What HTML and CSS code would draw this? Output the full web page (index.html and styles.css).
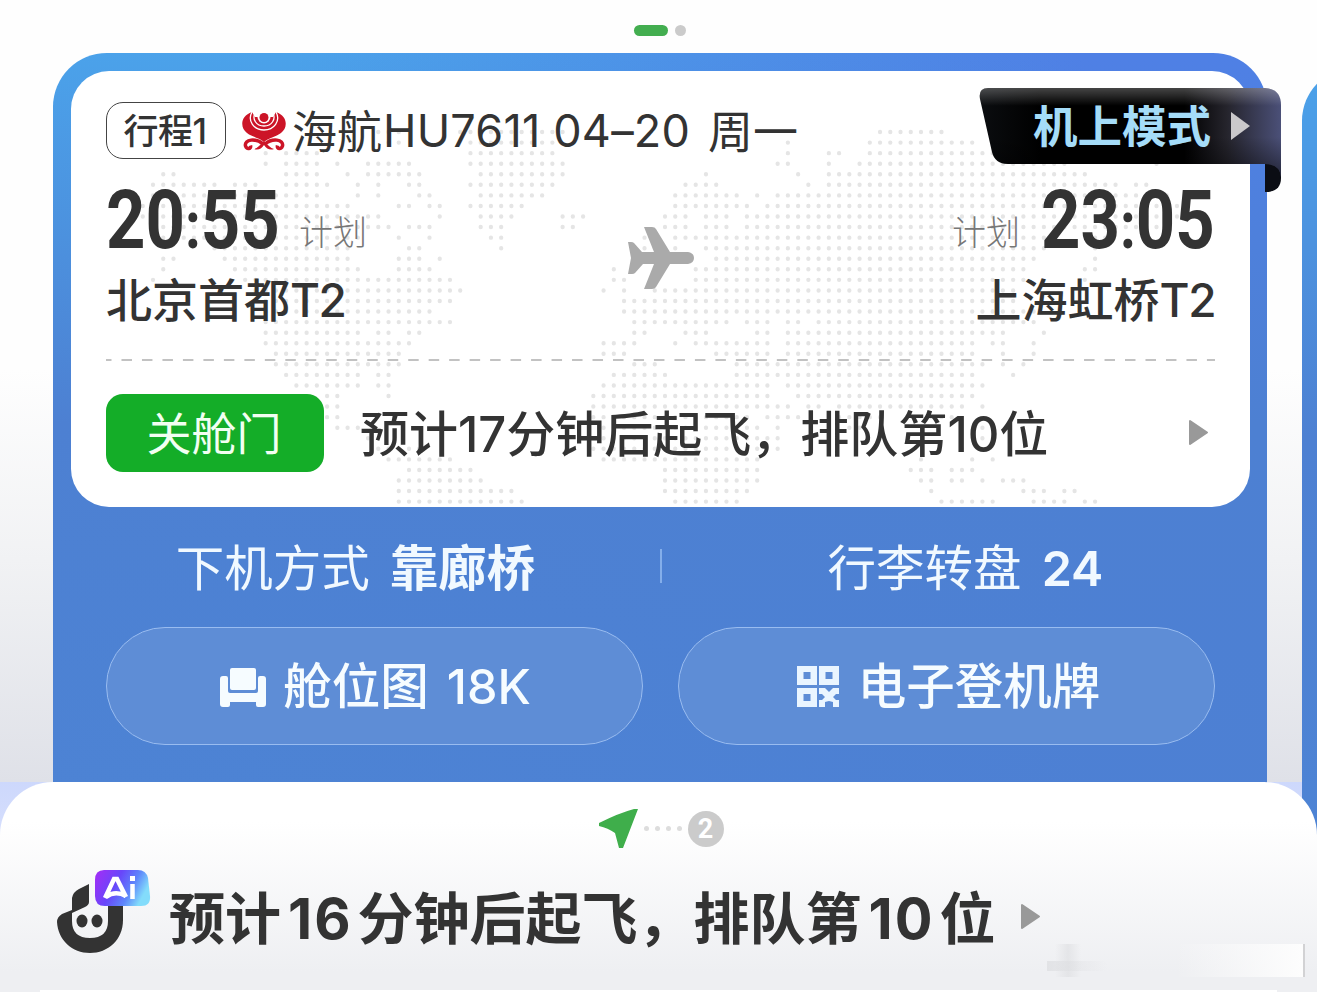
FILE: index.html
```html
<!DOCTYPE html>
<html lang="zh-CN">
<head>
  <meta charset="UTF-8" />
  <meta name="viewport" content="width=device-width, initial-scale=1.0"/>
  <title>航班行程</title>
  <link rel="stylesheet" href="styles.css">
</head>
<body>
  <div class="page">
    <div class="pager">
      <span class="pager-on"></span>
      <span class="pager-off"></span>
    </div>

    <div class="carousel">
      <div class="trip">
        <div class="card">
          <!-- dotted world map, one subpath per run of dots -->
          <svg class="map" viewBox="-9.01 -5.78 115.14 41.29" preserveAspectRatio="none">
            <path d="M21 0h2.1M29 0h10.1M70 0h6.1M22 1h1.1M30 1h8.1M61 1h.1M69 1h10.1M10 2h.1M12 2h3.1M30 2h8.1M61 2h.1M65 2h1.1M69 2h12.1M10 3h.1M12 3h3.1M17 3h.1M20 3h4.1M30 3h9.1M60 3h1.1M65 3h.1M68 3h20.1M97 3h.1M0 4h1.1M12 4h3.1M18 4h.1M20 4h5.1M31 4h8.1M53 4h.1M62 4h.1M65 4h25.1"/>
            <path d="M-1 5h6.1M7 5h2.1M12 5h4.1M19 5h.1M21 5h.1M24 5h1.1M30 5h8.1M51 5h3.1M63 5h.1M65 5h28.1M95 5h1.1M-1 6h16.1M19 6h.1M21 6h.1M25 6h1.1M31 6h6.1M50 6h6.1M58 6h.1M60 6h38.1M-2 7h20.1M23 7h1.1M26 7h1.1M30 7h5.1M50 7h7.1M59 7h41.1M-2 8h23.1M27 8h.1M31 8h3.1M39 8h2.1M49 8h2.1M53 8h2.1M57 8h42.1M0 9h22.1M24 9h2.1M31 9h2.1M39 9h1.1M49 9h2.1M53 9h2.1M57 9h40.1"/>
            <path d="M0 10h19.1M23 10h.1M26 10h.1M32 10h1.1M47 10h1.1M50 10h1.1M52 10h34.1M91 10h1.1M5 11h13.1M24 11h1.1M33 11h.1M47 11h3.1M53 11h33.1M91 11h.1M0 12h1.1M6 12h12.1M23 12h2.1M27 12h.1M47 12h3.1M54 12h31.1M91 12h.1M0 13h.1M7 13h12.1M23 13h3.1M44 13h.1M52 13h32.1M90 13h1.1M-1 14h.1M8 14h20.1M44 14h1.1M52 14h32.1M90 14h.1M9 15h20.1M43 15h.1M45 15h.1M48 15h35.1M10 16h18.1M45 16h38.1M10 17h16.1M45 17h40.1"/>
            <path d="M10 18h18.1M46 18h9.1M57 18h2.1M61 18h1.1M64 18h21.1M10 19h9.1M21 19h1.1M24 19h1.1M46 19h1.1M51 19h2.1M58 19h1.1M61 19h21.1M86 19h.1M10 20h14.1M43 20h3.1M50 20h.1M52 20h7.1M61 20h18.1M81 20h1.1M85 20h.1M11 21h12.1M43 21h2.1M54 21h5.1M61 21h18.1M82 21h.1M85 21h.1M11 22h12.1M46 22h2.1M56 22h24.1M82 22h.1M84 22h.1M12 23h7.1M21 23h1.1M44 23h5.1M56 23h23.1M83 23h.1M13 24h6.1M21 24h1.1M43 24h16.1M61 24h19.1"/>
            <path d="M16 25h1.1M22 25h.1M42 25h14.1M57 25h2.1M62 25h17.1M16 26h1.1M42 26h14.1M57 26h4.1M63 26h1.1M66 26h12.1M80 26h.1M16 27h1.1M42 27h15.1M59 27h3.1M66 27h4.1M75 27h2.1M17 28h2.1M43 28h15.1M60 28h.1M67 28h1.1M80 28h.1M20 29h.1M43 29h17.1M80 29h.1M21 30h4.1M42 30h16.1M60 30h.1M78 30h.1M22 31h6.1M43 31h15.1M74 31h.1M79 31h.1M81 31h.1M24 32h6.1M49 32h9.1M73 32h2.1M77 32h2.1M23 33h8.1M49 33h6.1M56 33h2.1M74 33h1.1M77 33h1.1M80 33h.1M82 33h2.1M23 34h11.1M49 34h8.1M75 34h.1M84 34h2.1M88 34h1.1M23 35h12.1M50 35h6.1M76 35h5.1M85 35h3.1M90 35h1.1"/>
          </svg>

          <div class="flight">
            <span class="leg">行程1</span>
            <svg class="airline" viewBox="0 0 44 40">
              <path d="M10 1C-2 5-2 17 5 22c5 4 13 5 17 9 4-4 12-5 17-9 7-5 7-17-5-21l-3 5H13z"/>
              <path class="gap" d="M13 2c-3 6 1 13 9 13s12-7 9-13M10 1c-5 9 2 18 12 18S39 10 34 1"/>
              <circle class="halo" cx="22" cy="6" r="6.500"/>
              <circle cx="22" cy="6.500" r="4.500"/>
              <path class="curl" d="M21 33C14 27 2 28 3.500 35c1.500 4 6 3 5-.5M23 33c7-6 19-5 17.500 2-1.500 4-6 3-5-.5"/>
              <path d="M22 30l5 5q3 3 5 3-6 2-10-4-4 6-10 4 2 0 5-3z"/>
            </svg>
            <span class="flight-cn">海航</span>
            <span class="flight-no">HU7611 04–20</span>
            <span class="flight-cn weekday">周一</span>
          </div>

          <div class="times">
            <div class="time-group">
              <span class="time"><b>20<i>:</i>55</b></span>
              <span class="plan">计划</span>
            </div>
            <svg class="plane" viewBox="0 0 66 62">
              <path d="M16 0h8q3 0 4 2l14 23h18q6 1 6 6t-6 6H42L28 60q-1 2-4 2h-8l10-25H15L7 46q-1 1-3 1H0l3-16L0 15h3q2 0 3 1l8 9h12z"/>
            </svg>
            <div class="time-group">
              <span class="plan">计划</span>
              <span class="time"><b>23<i>:</i>05</b></span>
            </div>
          </div>

          <div class="airports">
            <span>北京首都<i>T2</i></span>
            <span>上海虹桥<i>T2</i></span>
          </div>

          <svg class="divider" viewBox="0 0 1109 2">
            <path d="M0 1H1109"/>
          </svg>

          <div class="status">
            <span class="gate">关舱门</span>
            <span class="status-text">预计<i>17</i>分钟后起飞，排队第<i>10</i>位</span>
            <svg class="arrow" viewBox="0 0 21 27"><path d="M2 2v23l17-11.500z"/></svg>
          </div>
        </div>

        <div class="arrival">
          <div class="arrival-item">下机方式<b>靠廊桥</b></div>
          <span class="bar"></span>
          <div class="arrival-item">行李转盘<b class="num">24</b></div>
        </div>

        <div class="actions">
          <div class="action">
            <svg class="seat" viewBox="0 0 46 40">
              <rect x="10" y="1" width="26" height="22" rx="2"/>
              <path d="M3 9h3q2 0 2 2v13q0 2 2 2h26q2 0 2-2V11q0-2 2-2h3q3 0 3 3v25q0 3-3 3h-5q-2 0-2-2v-3H10v3q0 2-2 2H3q-3 0-3-3V12q0-3 3-3z"/>
            </svg>
            <span>舱位图</span><span class="seat-no">18K</span>
          </div>
          <div class="action">
            <svg class="qr" viewBox="0 0 42 41">
              <path fill-rule="evenodd" d="M0 0h20v19H0zM6.500 6v7h7V6zM22 0h20v19H22zM28.500 6v7h7V6zM0 22h20v19H0zM6.500 28v7h7v-7z"/>
              <path d="M22 22h6l4 4 4-4h6v6h-3l-3 3 3 3h3v7h-6v-5l-4-1-4 1v5h-6v-7h3l3-3-3-3h-3z"/>
            </svg>
            <span>电子登机牌</span>
          </div>
        </div>

        <div class="ribbon">
          <svg class="ribbon-bg" viewBox="0 0 302 104">
            <defs>
              <linearGradient id="rb" x1="0" x2="1" y1="0" y2="0">
                <stop offset="0" stop-color="#0b0d10"/>
                <stop offset=".2" stop-color="#000"/>
                <stop offset=".68" stop-color="#000"/>
                <stop offset=".82" stop-color="#25242c"/>
                <stop offset="1" stop-color="#4b5078"/>
              </linearGradient>
              <linearGradient id="rs" x1="0" x2="0" y1="0" y2="1">
                <stop offset="0" stop-color="#fff" stop-opacity=".27"/>
                <stop offset=".2" stop-color="#fff" stop-opacity="0"/>
                <stop offset=".55" stop-color="#000" stop-opacity="0"/>
                <stop offset="1" stop-color="#000" stop-opacity=".5"/>
              </linearGradient>
            </defs>
            <path fill="#0b0d14" d="M286 74h16v16q0 14-16 14z"/>
            <path fill="url(#rb)" d="M9 0h277q16 1 16 17v72q-1-13-16-13H29q-13 0-16-12L1 11Q-1 0 9 0z"/>
            <path fill="url(#rs)" d="M9 0h277q16 1 16 17v72q-1-13-16-13H29q-13 0-16-12L1 11Q-1 0 9 0z"/>
            <path fill="#cac8cb" d="M252 24v28l19-14z"/>
          </svg>
          <span class="ribbon-text">机上模式</span>
        </div>
      </div>

      <div class="trip next"></div>
    </div>

    <div class="sheet">
      <div class="steps">
        <svg class="nav" viewBox="0 0 39 39"><path d="M39 0L24 39h-4l-4-15Q9 19 0 17v-3Q20 4 35 0z"/></svg>
        <span class="steps-dots"><i></i><i></i><i></i><i></i></span>
        <span class="step">2</span>
      </div>
      <div class="assistant">
        <svg class="bot" viewBox="0 0 94 84">
          <defs>
            <linearGradient id="ai" x1="0" x2="1" y1="0" y2=".35">
              <stop offset="0" stop-color="#a62cf6"/>
              <stop offset=".45" stop-color="#6846fa"/>
              <stop offset=".75" stop-color="#5e86fb"/>
              <stop offset="1" stop-color="#83dcfb"/>
            </linearGradient>
          </defs>
          <path class="dark" d="M32 14v18q0 3-4 5l-13 6v8q0 17 18 17t18-17V36h15v14C66 70 51 83 33 83 15 83 1 70 0 52q0-5 5-8l10-4V28q1-6 7-9z"/>
          <ellipse class="dark" cx="25" cy="51" rx="5.500" ry="6.500"/>
          <ellipse class="dark" cx="40" cy="51" rx="5.500" ry="6.500"/>
          <path fill="url(#ai)" d="M47 0h34q8 0 10 8l2 18q1 10-9 10H48Q38 36 38 26V10Q38 0 47 0z"/>
          <path class="ai-mark" d="M48 28L57 9h3l9 18M49 27q9-7 20-1M75.500 14v15"/>
          <path fill="#fff" d="M73 6h5v5h-5z"/>
        </svg>
        <span class="assistant-text">预计<i>16</i>分钟后起飞，排队第<i>10</i>位</span>
        <svg class="arrow" viewBox="0 0 21 27"><path d="M2 2v23l17-11.500z"/></svg>
      </div>
      <div class="watermark"></div>
      <div class="sheet-next"></div>
    </div>
  </div>
</body>
</html>
```
FILE: styles.css
```css
* {
  box-sizing: border-box;
  margin: 0;
  padding: 0;
}

body {
  font-family: Inter, 'Noto Sans CJK SC', sans-serif;
  color: #333;
}

i {
  font-style: normal;
}

svg {
  display: block;
  flex: none;
}

.page {
  width: 1317px;
  height: 992px;
  overflow: hidden;
  white-space: nowrap;
  background: linear-gradient(#fefefe 0, #fefefe 370px, #f1f2f4 560px, #dfe1e8 782px, #cdd8fc 782px, #d8e0fd 850px);
}

.pager {
  display: flex;
  justify-content: center;
  gap: 7px;
  height: 53px;
  padding: 25px 0 0 3px;
}

.pager-on,
.pager-off {
  width: 34px;
  height: 11px;
  border-radius: 6px;
  background: #43ae50;
}

.pager-off {
  width: 11px;
  background: #cbcbcb;
}

.carousel {
  display: flex;
  gap: 35px;
  height: 790px;
  padding-left: 53px;
}

.trip {
  position: relative;
  flex: none;
  width: 1214px;
  padding: 18px 17px 0 18px;
  border-radius: 54px 54px 0 0;
  background: linear-gradient(rgba(77, 128, 210, 0), #4d80d2 370px, rgba(77, 128, 210, 0.9)), linear-gradient(90deg, #4ba2ea 20%, #4f80e5 85%);
}

.next {
  margin-top: 14px;
}

.card {
  position: relative;
  height: 436px;
  padding: 31px 35px 0;
  border-radius: 38px;
  background: #fff;
  overflow: hidden;
}

.card > * {
  position: relative;
}

.card .map {
  position: absolute;
  left: 0;
  top: 0;
  width: 1179px;
  height: 436px;
}

.map path {
  fill: none;
  stroke: #e5e5e5;
  stroke-width: 0.42;
  stroke-linecap: round;
  stroke-dasharray: 0 1;
}

.flight {
  display: flex;
  align-items: center;
  height: 57px;
}

.leg {
  width: 120px;
  height: 57px;
  padding-right: 2px;
  border: 1.500px solid #444;
  border-radius: 17px;
  text-align: center;
  font-size: 35px;
  font-weight: 500;
  line-height: 57px;
  letter-spacing: -0.500px;
}

.airline {
  width: 44px;
  height: 40px;
  margin: 0 6px 0 16px;
  fill: #cc1427;
}

.airline .curl {
  fill: none;
  stroke: #cc1427;
  stroke-width: 3.500;
}

.airline .gap {
  fill: none;
  stroke: #fff;
  stroke-width: 1.300;
}

.airline .halo {
  fill: #fff;
}

.flight-cn {
  margin-top: -2px;
  font-size: 45px;
}

.flight-no {
  margin-left: 1px;
  font-size: 45px;
  font-weight: 400;
  letter-spacing: 0.200px;
}

.weekday {
  margin-left: 18px;
}

.times {
  display: flex;
  justify-content: space-between;
  height: 86px;
  margin-top: 19px;
}

.time-group {
  display: flex;
  align-items: center;
}

.time {
  width: 172px;
}

.time b {
  display: inline-block;
  font: 700 81px/86px Roboto, sans-serif;
  transform: scaleX(0.85);
  transform-origin: 0 50%;
}

.time i {
  font-size: 66px;
  line-height: 1;
}

.time-group:last-child .time {
  width: 174px;
}

.plan {
  margin: 24px 21px 0;
  color: #777;
  font-size: 34px;
  font-weight: 300;
  line-height: 50px;
}

.plane {
  width: 66px;
  height: 62px;
  margin: 49px 0 0 2px;
  fill: #aaa;
}

.airports {
  display: flex;
  justify-content: space-between;
  height: 95px;
  padding-top: 3px;
  font-size: 46px;
  font-weight: 500;
  line-height: 66px;
}

.airports i {
  letter-spacing: -1.500px;
}

.divider {
  width: 1109px;
  height: 2px;
}

.divider path {
  stroke: #c2c2c2;
  stroke-width: 2;
  stroke-dasharray: 10.500 9.980;
  stroke-dashoffset: 5;
}

.status {
  display: flex;
  align-items: center;
  margin-top: 33px;
  height: 78px;
}

.gate {
  width: 218px;
  height: 78px;
  padding-right: 2px;
  border-radius: 17px;
  background: #14ad28;
  color: #f2fff2;
  text-align: center;
  font-size: 45px;
  line-height: 82px;
}

.status-text {
  flex: 1;
  margin-left: 36px;
  padding-bottom: 5px;
  font-size: 49px;
  font-weight: 500;
}

.arrow {
  width: 21px;
  height: 27px;
  fill: #999;
  stroke: #999;
  stroke-width: 2;
  stroke-linejoin: round;
}

.status .arrow {
  margin: 0 6px 2px 0;
}

.arrival {
  display: flex;
  align-items: center;
  height: 120px;
  color: #f1f9ff;
  font-size: 48.500px;
}

.arrival-item {
  flex: 1;
  display: flex;
  align-items: baseline;
  justify-content: center;
  gap: 20px;
  padding: 0 20px 4px 0;
}

.bar + .arrival-item {
  padding: 0 0 4px 19px;
}

.arrival-item .num {
  font-weight: 600;
}

.bar {
  width: 2px;
  height: 34px;
  margin-bottom: 2px;
  background: #84aeea;
}

.actions {
  display: flex;
  gap: 35px;
  padding: 0 35px;
}

.action {
  flex: 1;
  display: flex;
  align-items: center;
  justify-content: center;
  height: 118px;
  padding-top: 2px;
  border: 1.500px solid #99bcf0;
  border-radius: 59px;
  background: #5e8dd6;
  color: #f6fcff;
  font-size: 48.500px;
  font-weight: 500;
  line-height: 116px;
}

.seat {
  width: 46px;
  height: 40px;
  margin: 0 17px 0 2px;
  fill: #f6fcff;
}

.seat-no {
  margin-left: 18px;
}

.qr {
  width: 42px;
  height: 41px;
  margin: 0 19px 2px 4px;
  fill: #eaf5ff;
}

.ribbon {
  position: absolute;
  left: 926px;
  top: 35px;
  width: 302px;
  height: 104px;
}

.ribbon-bg {
  width: 302px;
  height: 104px;
}

.ribbon-text {
  position: absolute;
  left: 54px;
  top: 6px;
  color: #a5dcf8;
  font-size: 44.500px;
  font-weight: 700;
  line-height: 66px;
}

.sheet {
  position: relative;
  height: 210px;
  margin-top: -61px;
  border-radius: 53px 53px 0 0;
  background: linear-gradient(#fff 0, #fff 40px, #eeeff2 190px);
  overflow: hidden;
}

.steps {
  display: flex;
  align-items: center;
  justify-content: center;
  height: 93px;
  padding-left: 5px;
}

.nav {
  width: 39px;
  height: 39px;
  fill: #3fae4b;
}

.steps-dots {
  display: flex;
  gap: 6px;
  margin: 0 6px 0 6px;
}

.steps-dots i {
  width: 5px;
  height: 5px;
  border-radius: 50%;
  background: #ddd;
}

.step {
  width: 36px;
  height: 36px;
  border-radius: 50%;
  background: #cbcbcb;
  color: #fff;
  text-align: center;
  font: 700 27px/36px Roboto, sans-serif;
}

.assistant {
  display: flex;
  align-items: center;
  height: 84px;
  margin-top: -5px;
  padding-left: 57px;
}

.bot {
  width: 94px;
  height: 84px;
  margin-right: 18px;
}

.bot .dark {
  fill: #333;
}

.ai-mark {
  fill: none;
  stroke: #fff;
  stroke-width: 4.500;
}

.assistant-text {
  margin-right: 25px;
  padding-top: 4px;
  font-size: 56px;
  font-weight: 700;
}

.assistant-text i {
  margin: 0 5px 0 7px;
  letter-spacing: 2px;
}

.assistant .arrow {
  margin-top: 8px;
}

/* faint mark in the bottom corner */
.watermark {
  position: absolute;
  right: 12px;
  bottom: 15px;
  width: 258px;
  height: 33px;
  border-right: 2px solid #d2d2d4;
  background:
    linear-gradient(90deg, rgba(220, 221, 224, 0), rgba(220, 221, 224, 0.6), rgba(220, 221, 224, 0)) 8px 0 / 26px 33px no-repeat,
    linear-gradient(90deg, rgba(220, 221, 224, 0.7), rgba(220, 221, 224, 0)) 0 17px / 60px 10px no-repeat,
    linear-gradient(90deg, rgba(255, 255, 255, 0) 50%, #fdfdfd);
}

.sheet-next {
  position: absolute;
  left: 40px;
  right: 40px;
  bottom: 0;
  height: 2px;
  background: #fff;
}
```
